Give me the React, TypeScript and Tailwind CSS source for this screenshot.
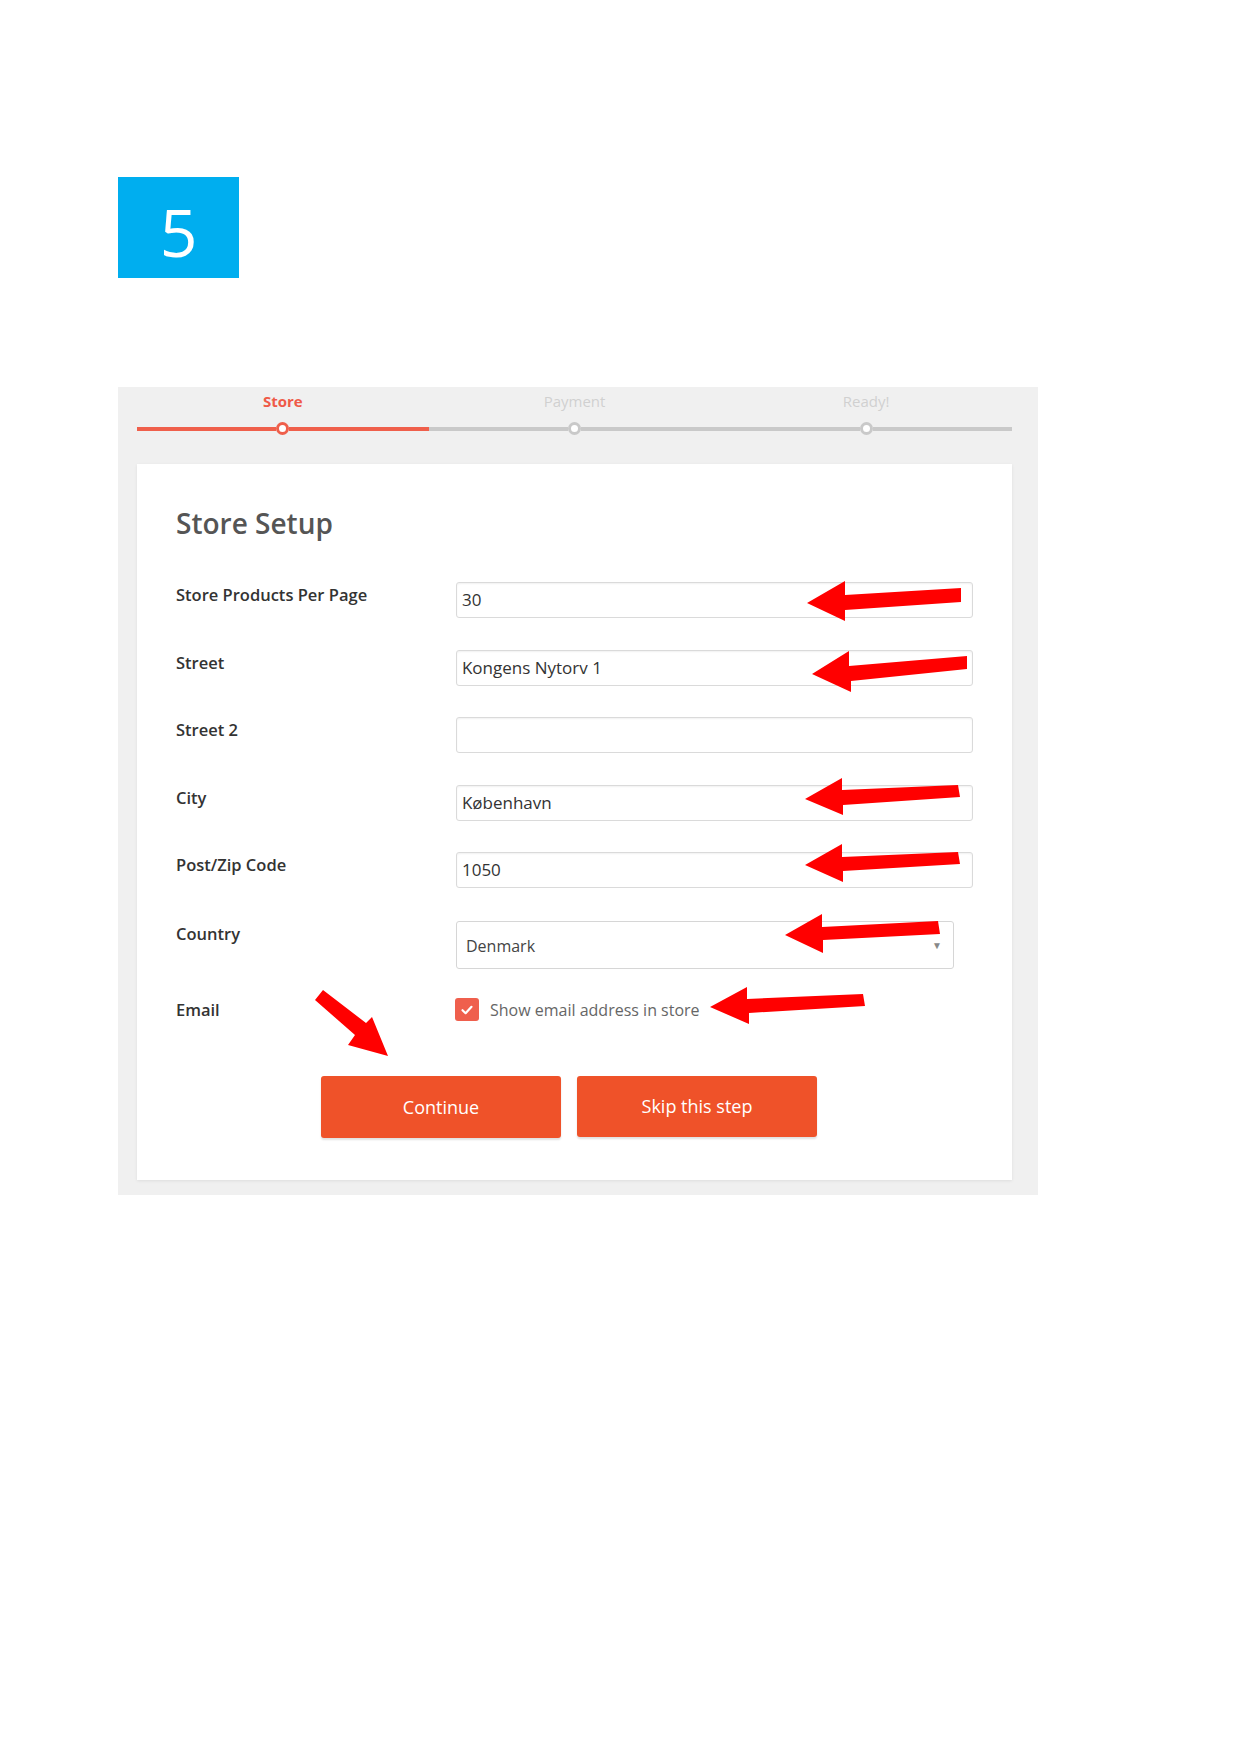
import React from "react";

const rows = [
  { label: "Store Products Per Page", value: "30" },
  { label: "Street", value: "Kongens Nytorv 1" },
  { label: "Street 2", value: "" },
  { label: "City", value: "København" },
  { label: "Post/Zip Code", value: "1050" },
];

const arrows: string[] = [
  "807,603 845,581 845,595 961,588 961,602 845,610 845,621",
  "812,674 849,651 849,666 967,656 967,669 851,681 851,692",
  "805,799 842,778 842,790 958,785 960,797 843,805 843,815",
  "805,865 842,844 842,857 958,852 960,864 843,871 843,882",
  "785,935 822,914 822,927 938,921 940,934 823,940 823,953",
  "710,1007 747,987 747,999 863,994 865,1006 749,1013 749,1024",
  "323,990 366,1023 372,1017 388,1056 348,1045 355,1035 315,1000",
];

function Step({ label, active }: { label: string; active: boolean }) {
  const line = active ? "bg-[#ef5f4b]" : "bg-[#c9c9c9]";
  return (
    <div className="flex flex-col">
      <div
        className={
          "h-[20px] text-center text-[15px] leading-[20px] " +
          (active ? "font-bold text-[#ef5a48]" : "text-[#d0d0d0]")
        }
      >
        {label}
      </div>
      <div className="mt-[11px] flex h-[13px] items-center">
        <div className={"h-[4px] flex-1 " + line} />
        <div
          className={
            "h-[13px] w-[13px] rounded-full border-[3.5px] bg-white " +
            (active ? "border-[#ef5f4b]" : "border-[#c9c9c9]")
          }
        />
        <div className={"h-[4px] flex-1 " + line} />
      </div>
    </div>
  );
}

export default function App() {
  return (
    <div className="relative h-[1754px] w-[1240px] overflow-hidden bg-white font-['Open_Sans',sans-serif]">
      <div className="pl-[118px] pt-[177px]">
        <div className="flex h-[101px] w-[121px] items-center justify-center bg-[#00aeef] pt-[7px] text-[66px] leading-none text-white">
          5
        </div>
      </div>

      <div className="ml-[118px] mt-[109px] w-[920px] bg-[#f0f0f0] pb-[15px] pl-[19px] pr-[26px]">
        <div className="grid h-[77px] grid-cols-3 pt-[4px]">
          <Step label="Store" active />
          <Step label="Payment" active={false} />
          <Step label="Ready!" active={false} />
        </div>

        <div className="bg-white px-[39px] pb-[42px] pt-[40px] shadow-[0_1px_3px_rgba(0,0,0,0.08)]">
          <h1 className="h-[38px] text-[28px] font-semibold leading-[38px] text-[#555]">Store Setup</h1>

          <div className="mt-[40px] flex flex-col gap-[31.5px]">
            {rows.map((r) => (
              <div key={r.label} className="flex h-[36px] items-start">
                <div className="w-[281px] pt-[3px] text-[16.5px] font-semibold leading-[20px] text-[#333]">
                  {r.label}
                </div>
                <div className="flex h-[36px] w-[519px] items-center rounded-[3px] border border-[#dadada] pl-[5px] text-[17px] text-[#333] shadow-[inset_0_1px_2px_rgba(0,0,0,0.06)]">
                  {r.value}
                </div>
              </div>
            ))}
          </div>

          <div className="mt-[33px] flex h-[48px] items-start">
            <div className="w-[280px] pt-[3px] text-[16.5px] font-semibold leading-[20px] text-[#333]">Country</div>
            <div className="flex h-[48px] w-[498px] items-center justify-between rounded-[3px] border border-[#d6d6d6] pl-[9px] pr-[11px] text-[16px] text-[#444]">
              <span className="pt-[2px]">Denmark</span>
              <span className="text-[10px] text-[#888]">▼</span>
            </div>
          </div>

          <div className="mt-[29px] flex h-[23px] items-center">
            <div className="w-[279px] text-[16.5px] font-semibold leading-[20px] text-[#333]">Email</div>
            <div className="flex h-[23px] w-[24px] items-center justify-center rounded-[3px] bg-[#ef5f4d]">
              <svg width="14" height="14" viewBox="0 0 14 14">
                <path d="M2.5 7.2 L5.6 10.2 L11.5 3.8" fill="none" stroke="white" strokeWidth="2.2" strokeLinecap="round" strokeLinejoin="round" />
              </svg>
            </div>
            <div className="ml-[11px] text-[16px] text-[#666]">Show email address in store</div>
          </div>

          <div className="ml-[145px] mt-[55px] flex gap-[16px]">
            <button className="flex h-[62px] w-[240px] items-center justify-center rounded-[3px] bg-[#ef5229] text-[18px] text-white shadow-[0_2px_2px_rgba(0,0,0,0.12)]">
              Continue
            </button>
            <button className="flex h-[61px] w-[240px] items-center justify-center rounded-[3px] bg-[#ef5229] text-[18px] text-white shadow-[0_2px_2px_rgba(0,0,0,0.12)]">
              Skip this step
            </button>
          </div>
        </div>
      </div>

      <svg
        className="pointer-events-none absolute left-0 top-0"
        width="1240"
        height="1754"
        viewBox="0 0 1240 1754"
      >
        {arrows.map((p, i) => (
          <polygon key={i} points={p} fill="#ff0000" />
        ))}
      </svg>
    </div>
  );
}
